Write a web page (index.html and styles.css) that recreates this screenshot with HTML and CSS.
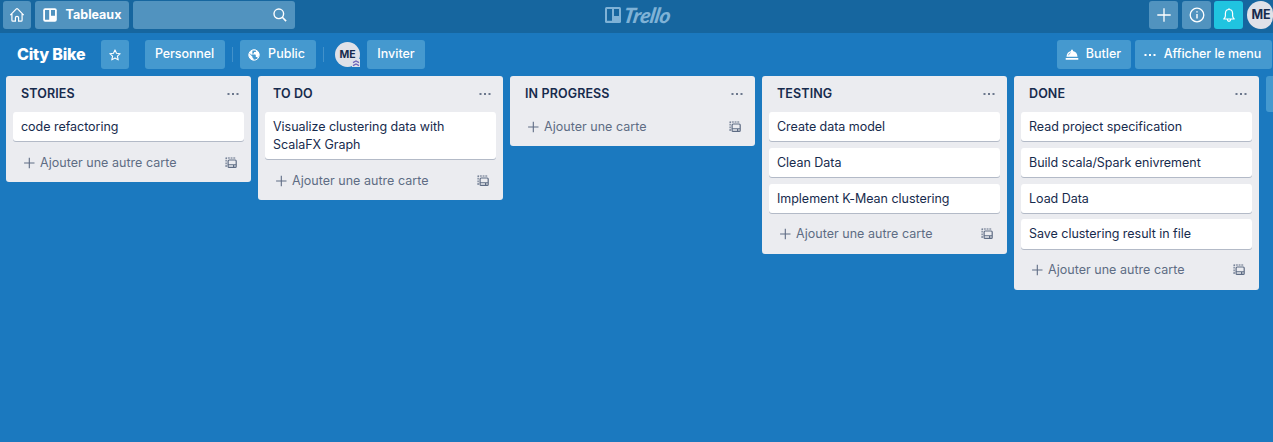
FILE: index.html
```html
<!DOCTYPE html>
<html lang="fr">
<head>
<meta charset="utf-8">
<title>City Bike</title>
<link rel="stylesheet" href="styles.css">
</head>
<body>
<svg class="defs" width="0" height="0">
  <symbol id="plus" viewBox="0 0 12 12"><path d="M6.3 .8v10.4M1.1 6h10.4" fill="none" stroke="currentColor" stroke-width="1.1"/></symbol>
  <symbol id="template" viewBox="0 0 12 12"><path d="M1.1 10V1h9.2" fill="none" stroke="currentColor" stroke-width="1.1" stroke-dasharray="1.9 .8"/><rect x="3.1" y="3" width="8.1" height="7.4" rx="1" fill="none" stroke="currentColor" stroke-width="1.2"/><path d="M3 7.3h8v1H3zM8 8h1.3v2.4H8z" fill="currentColor"/></symbol>
  <symbol id="dots" viewBox="0 0 12 4"><path d="M.5 1h2v2h-2zM5 1h2v2H5zM9.5 1h2v2h-2z" fill="currentColor"/></symbol>
</svg>
<header class="topbar">
  <div class="group">
    <a class="tile home"><svg width="16" height="16" viewBox="0 0 16 16"><path d="M1.3 8.2 7.1 2.1q.9-.9 1.8 0l5.8 6.1M2.9 7v6.2q0 1 1 1h2.5v-3.5q0-1.3 1.6-1.3t1.6 1.3v3.5h2.5q1 0 1-1V7" fill="none" stroke="#fff" stroke-width="1.2"/></svg></a>
    <a class="tile boards"><svg width="14" height="14" viewBox="0 0 14 14"><rect x=".2" y=".2" width="13.6" height="13.6" rx="2" fill="#fff"/><path d="M2 2h4.2v9.8H2zM8 2h4v5.8H8z" fill="#5193bf"/></svg><span>Tableaux</span></a>
    <div class="tile search"><svg width="14" height="14" viewBox="0 0 14 14"><circle cx="5.8" cy="5.8" r="4.8" fill="none" stroke="#fff" stroke-width="1.4"/><path d="m9.3 9.3 3.8 3.8" stroke="#fff" stroke-width="1.6"/></svg></div>
  </div>
  <div class="logo"><svg width="16" height="16" viewBox="0 0 16 16"><rect width="16" height="16" rx="1.5" fill="#7fb2d6"/><path d="M2 2h5v11.8H2zM9 2h5v7H9z" fill="#16669f"/></svg><span>Trello</span></div>
  <div class="group right">
    <a class="tile add"><svg width="14" height="14" viewBox="0 0 14 14"><path d="M7 .3v13.4M.3 7h13.4" stroke="#fff" stroke-width="1.3"/></svg></a>
    <a class="tile info"><svg width="16" height="16" viewBox="0 0 16 16"><circle cx="8" cy="8" r="6.8" fill="none" stroke="#fff" stroke-width="1.3"/><path d="M8 7v4.5M8 4.2v1.4" stroke="#fff" stroke-width="1.4"/></svg></a>
    <a class="tile bell"><svg width="14" height="14" viewBox="0 0 14 14"><path d="M7 .2v1.2M1.8 11h10.4q-1.5-1.3-1.6-3V5.4Q10.4 1.5 7 1.5T3.4 5.4V8q-.1 1.7-1.6 3zM5.3 11.4q.2 1.9 1.7 1.9t1.7-1.9" fill="none" stroke="#fff" stroke-width="1.2" stroke-linejoin="round"/></svg></a>
    <span class="avatar large">ME</span>
  </div>
</header>
<nav class="boardbar">
  <h1>City Bike</h1>
  <a class="btn star"><svg width="12" height="12" viewBox="0 0 12 12"><path d="m6 .9 1.5 3.4 3.7.4-2.8 2.5.8 3.7L6 9l-3.2 1.9.8-3.7L.8 4.7l3.7-.4z" fill="none" stroke="#fff" stroke-width="1.1" stroke-linejoin="round"/></svg></a>
  <a class="btn team"><span>Personnel</span></a>
  <i class="sep"></i>
  <a class="btn public"><svg width="12" height="12" viewBox="0 0 12 12"><circle cx="6" cy="6" r="5.2" fill="none" stroke="#fff" stroke-width="1"/><path d="M1 4.2 4.5 7.8v1l1.1 1v1.4Q1.5 10.7.9 6zM4.4.9l3.7.3v1q0 .8-1 .8H6v1q0 .6-.9.6H4v1h3q.8 0 .8.8V8h.7q.8 0 1.1.9Q13 5 9.3 1.8 6.6-.2 4.4.9zM1.2 3.2 4.5 1l-.3 4.2-1.1.6z" fill="#fff"/></svg><span>Public</span></a>
  <i class="sep two"></i>
  <span class="avatar small">ME<svg class="badge" width="8" height="8" viewBox="0 0 8 8"><path d="M0 0h8v8H0z" fill="#dfe1ea"/><path d="m1 3.6 3-1.6 3 1.6M1 6.6 4 5l3 1.6" fill="none" stroke="#6e64b8" stroke-width="1.3"/></svg></span>
  <a class="btn invite"><span>Inviter</span></a>
  <div class="actions">
    <a class="btn butler"><svg width="14" height="13" viewBox="0 0 14 13"><path d="M1.5 8.8q.4-5 4.6-5.8-.6-1.6.9-1.6T7.9 3q4.2.8 4.6 5.8zM.7 10h12.6v1.8H.7z" fill="#fff"/><path d="M3.4 7.3q.6-2 2.2-2.6" fill="none" stroke="#4599cf" stroke-width=".7"/></svg><span>Butler</span></a>
    <a class="btn menu"><svg width="12" height="4"><use href="#dots"/></svg><span>Afficher le menu</span></a>
  </div>
</nav>
<main class="lists">
  <section class="list">
    <header><h2>STORIES</h2><svg width="12" height="4"><use href="#dots"/></svg></header>
    <div class="card">code refactoring</div>
    <footer><svg width="12" height="12"><use href="#plus"/></svg><span>Ajouter une autre carte</span><svg class="tpl" width="12" height="12"><use href="#template"/></svg></footer>
  </section>
  <section class="list">
    <header><h2>TO DO</h2><svg width="12" height="4"><use href="#dots"/></svg></header>
    <div class="card">Visualize clustering data with<br>ScalaFX Graph</div>
    <footer><svg width="12" height="12"><use href="#plus"/></svg><span>Ajouter une autre carte</span><svg class="tpl" width="12" height="12"><use href="#template"/></svg></footer>
  </section>
  <section class="list">
    <header><h2>IN PROGRESS</h2><svg width="12" height="4"><use href="#dots"/></svg></header>
    <footer><svg width="12" height="12"><use href="#plus"/></svg><span>Ajouter une carte</span><svg class="tpl" width="12" height="12"><use href="#template"/></svg></footer>
  </section>
  <section class="list tall">
    <header><h2>TESTING</h2><svg width="12" height="4"><use href="#dots"/></svg></header>
    <div class="card">Create data model</div>
    <div class="card">Clean Data</div>
    <div class="card">Implement K-Mean clustering</div>
    <footer><svg width="12" height="12"><use href="#plus"/></svg><span>Ajouter une autre carte</span><svg class="tpl" width="12" height="12"><use href="#template"/></svg></footer>
  </section>
  <section class="list tall">
    <header><h2>DONE</h2><svg width="12" height="4"><use href="#dots"/></svg></header>
    <div class="card">Read project specification</div>
    <div class="card">Build scala/Spark enivrement</div>
    <div class="card">Load Data</div>
    <div class="card last">Save clustering result in file</div>
    <footer><svg width="12" height="12"><use href="#plus"/></svg><span>Ajouter une autre carte</span><svg class="tpl" width="12" height="12"><use href="#template"/></svg></footer>
  </section>
  <div class="newlist"></div>
</main>
</body>
</html>
```
FILE: styles.css
```css
* { box-sizing: border-box; }
body { margin: 0; height: 442px; overflow: hidden; background: #1b79bf; color: #172b4d; font: 12.5px/18px Inter, "Liberation Sans", sans-serif; }
svg { display: block; flex: none; }
.defs { position: absolute; }
h1, h2 { margin: 0; }

.topbar { height: 33px; background: #16669f; display: grid; grid-template-columns: 1fr 68px 1fr; align-items: start; padding: 1px 0 0 3px; }
.group { display: flex; gap: 4px; }
.tile { height: 28px; border-radius: 3px; background: #5193bf; color: #fff; display: flex; align-items: center; justify-content: center; }
.home { width: 28px; }
.boards { width: 94px; gap: 9px; font-weight: 700; }
.search { width: 162px; justify-content: flex-end; padding-right: 8px; }
.logo { display: flex; align-items: center; gap: 3px; height: 28px; padding-left: 1px; color: #7fb2d6; font: italic 900 21px/28px Lato, sans-serif; letter-spacing: -.4px; }
.logo span { transform: skewX(-10deg); }
.right { justify-content: flex-end; }
.add, .info, .bell { width: 29px; }
.info { margin-right: -1px; }
.bell { background: #20c4e0; }
.avatar { border-radius: 50%; background: #dfe1e8; color: #172b4d; font-weight: 700; display: flex; align-items: center; justify-content: center; flex: none; }
.large { width: 26px; height: 28px; border-radius: 14px 12px 12px 14px; font-size: 12.5px; padding-left: 2px; }
.small { position: relative; width: 25px; height: 25px; font-size: 10.5px; margin-right: 7px; }
.badge { position: absolute; right: 0; bottom: 0; }

.boardbar { height: 43px; padding: 0 1px 0 17px; display: flex; align-items: center; color: #fff; font-size: 12.5px; font-weight: 500; }
h1 { width: 84px; padding-bottom: 2px; font-size: 16px; line-height: 22px; font-weight: 800; letter-spacing: -.2px; white-space: nowrap; }
.btn { height: 29px; border-radius: 3px; background: #4599cf; display: flex; align-items: center; justify-content: center; white-space: nowrap; }
.btn span { padding-bottom: 2px; }
.star { width: 28px; margin-right: 16px; }
.team { width: 80px; padding-right: 1px; letter-spacing: -.08px; }
.sep { width: 1px; height: 15px; background: #4291ca; margin: 0 7px; }
.two { margin: 0 11px 0 7px; }
.public { width: 76px; gap: 8px; padding-right: 3px; }
.invite { width: 58px; }
.actions { display: flex; gap: 4px; margin-left: auto; }
.butler { width: 74px; gap: 7px; padding-right: 2px; }
.menu { width: 137px; gap: 8px; padding-right: 2px; letter-spacing: -.08px; }

.lists { display: flex; align-items: flex-start; gap: 7px; padding-left: 6px; }
.list { width: 245px; flex: none; border-radius: 3px; background: #ebecf0; padding: 0 7px; }
.tall { padding-bottom: .6px; }
.list header { height: 36px; display: flex; align-items: center; justify-content: space-between; padding: 0 5px 0 8px; color: #6b778c; }
h2 { font-size: 12.5px; line-height: 18px; font-weight: 600; letter-spacing: .12px; color: #172b4d; }
.card { background: #fff; border-radius: 3px; box-shadow: 0 1px 0 #b3bac7; padding: 6px 8px 5px; margin-bottom: 6.84px; white-space: nowrap; letter-spacing: -.03px; }
.last { padding-bottom: 5.5px; margin-bottom: 6.34px; }
.list footer { height: 34px; display: flex; align-items: center; gap: 5px; padding: 0 7px 4px 10px; color: #5e6c84; letter-spacing: .03px; }
.tpl { margin-left: auto; }
.newlist { flex: 1; height: 36px; border-radius: 3px 0 0 3px; background: #4599cf; }
```
